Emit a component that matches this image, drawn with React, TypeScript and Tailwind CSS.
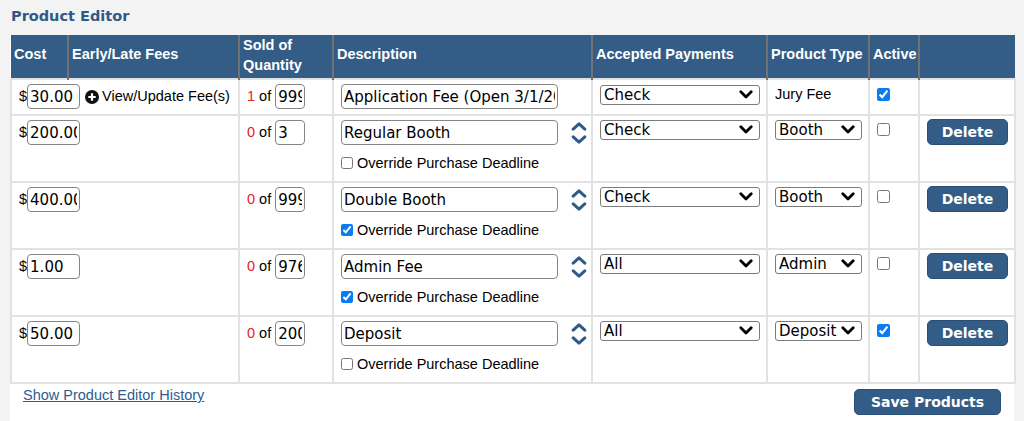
import React from "react";

type Row = {
  cost: string;
  sold: number;
  qty: string;
  desc: string;
  override?: boolean;
  payment: string;
  type: string;
  active: boolean;
  first?: boolean;
};

const rows: Row[] = [
  { cost: "30.00", sold: 1, qty: "999", desc: "Application Fee (Open 3/1/2025)", payment: "Check", type: "Jury Fee", active: true, first: true },
  { cost: "200.00", sold: 0, qty: "3", desc: "Regular Booth", override: false, payment: "Check", type: "Booth", active: false },
  { cost: "400.00", sold: 0, qty: "999", desc: "Double Booth", override: true, payment: "Check", type: "Booth", active: false },
  { cost: "1.00", sold: 0, qty: "976", desc: "Admin Fee", override: true, payment: "All", type: "Admin", active: false },
  { cost: "50.00", sold: 0, qty: "200", desc: "Deposit", override: false, payment: "All", type: "Deposit", active: true },
];

const sans = "font-['Liberation_Sans',Arial,sans-serif]";
const dv = "font-['DejaVu_Sans',Verdana,sans-serif]";

function Chevron() {
  return (
    <svg width="14" height="9" viewBox="0 0 14 9" className="pointer-events-none absolute right-[7px] top-[5px]">
      <path d="M1.8 1.8 L7 7 L12.2 1.8" fill="none" stroke="#000" strokeWidth="2.8" strokeLinecap="round" strokeLinejoin="round" />
    </svg>
  );
}

function Select({ value, width }: { value: string; width: string }) {
  return (
    <div className={`relative ${width}`}>
      <select
        defaultValue={value}
        className={`${dv} block h-[20px] w-full appearance-none rounded-[3px] border border-[#7b7b7b] bg-white pl-[3px] text-[15px] leading-[18px] text-black outline-none`}
      >
        <option>{value}</option>
      </select>
      <Chevron />
    </div>
  );
}

function UpDown() {
  return (
    <svg width="16" height="22" viewBox="0 0 16 22" className="ml-[13px] shrink-0">
      <path d="M2.2 7.2 L8 1.8 L13.8 7.2" fill="none" stroke="#2f5b86" strokeWidth="3" strokeLinecap="round" strokeLinejoin="round" />
      <path d="M2.2 14.8 L8 20.2 L13.8 14.8" fill="none" stroke="#2f5b86" strokeWidth="3" strokeLinecap="round" strokeLinejoin="round" />
    </svg>
  );
}

function PlusCircle() {
  return (
    <svg width="14" height="14" viewBox="0 0 14 14" className="shrink-0">
      <circle cx="7" cy="7" r="7" fill="#111" />
      <path d="M7 3.3 V10.7 M3.3 7 H10.7" stroke="#fff" strokeWidth="2.2" />
    </svg>
  );
}

const inputCls = `${dv} h-[25px] rounded-[4px] border border-[#858585] bg-white px-[2px] text-[15px] text-black outline-none`;

const td = "border-2 border-[#e2e2e2] align-top pt-[4px] pl-[7px] pr-0";
const th = "border-x-2 border-[#727272] px-[3px] text-left align-middle font-bold text-[14.5px] leading-[20px] text-white";

export default function App() {
  return (
    <div className={`${sans} h-[421px] w-[1024px] overflow-hidden bg-[#f3f3f3] text-[14.5px] text-black`}>
      <div className="h-[35px] pl-[11px] pt-[6px]">
        <span className={`${dv} text-[14.5px] font-bold leading-[18px] text-[#2f5a86]`}>Product Editor</span>
      </div>
      <div className="ml-[10px] w-[1004px] bg-white">
        <table className="w-[1004px] table-fixed border-collapse">
          <colgroup>
            <col className="w-[57px]" />
            <col className="w-[171px]" />
            <col className="w-[94px]" />
            <col className="w-[259px]" />
            <col className="w-[175px]" />
            <col className="w-[102px]" />
            <col className="w-[50px]" />
            <col className="w-[96px]" />
          </colgroup>
          <thead>
            <tr className="h-[42px] bg-[#335c86]">
              <th className={`${th} border-l-0 pb-[6px]`}>Cost</th>
              <th className={`${th} pb-[6px]`}>Early/Late Fees</th>
              <th className={`${th} pb-[3px] leading-[19px]`}>Sold of Quantity</th>
              <th className={`${th} pb-[6px]`}>Description</th>
              <th className={`${th} pb-[6px]`}>Accepted Payments</th>
              <th className={`${th} pb-[6px]`}>Product Type</th>
              <th className={`${th} pb-[6px]`}>Active</th>
              <th className={`${th} border-r-0`}></th>
            </tr>
          </thead>
          <tbody>
            {rows.map((r, i) => (
              <tr key={i} className={r.first ? "h-[36px]" : "h-[67px]"}>
                <td colSpan={2} className={`${td} pl-[6px]`}>
                  <div className="flex items-center">
                    <span>$</span>
                    <input defaultValue={r.cost} className={`${inputCls} w-[53px]`} />
                    {r.first && (
                      <div className="ml-[5px] flex items-center">
                        <PlusCircle />
                        <span className="ml-[3px]">View/Update Fee(s)</span>
                      </div>
                    )}
                  </div>
                </td>
                <td className={`${td} pl-[6px]`}>
                  <div className="flex items-center">
                    <span className="text-[#e8202a]">{r.sold}</span>
                    <span className="ml-[4px]">of</span>
                    <input defaultValue={r.qty} className={`${inputCls} ml-[4px] w-[30px]`} />
                  </div>
                </td>
                <td className={`${td} pl-[7px]`}>
                  <div className="flex items-center">
                    <input defaultValue={r.desc} className={`${inputCls} w-[217px]`} />
                    {!r.first && <UpDown />}
                  </div>
                  {!r.first && (
                    <label className="mt-[10px] flex items-center">
                      <input
                        type="checkbox"
                        defaultChecked={r.override}
                        className="m-0 h-[12px] w-[12px] accent-[#0a7cf2]"
                      />
                      <span className="ml-[4px] leading-[16px]">Override Purchase Deadline</span>
                    </label>
                  )}
                </td>
                <td className={`${td} pl-[7px]`}>
                  <div className={r.first ? "pt-px" : ""}>
                    <Select value={r.payment} width="w-[160px]" />
                  </div>
                </td>
                <td className={`${td} pl-[7px]`}>
                  {r.first ? (
                    <div className="leading-[20px]">{r.type}</div>
                  ) : (
                    <Select value={r.type} width="w-[87px]" />
                  )}
                </td>
                <td className={`${td} pl-[7px]`}>
                  <input
                    type="checkbox"
                    defaultChecked={r.active}
                    className={`m-0 block h-[13px] w-[13px] accent-[#0a7cf2] ${r.first ? "mt-[4px]" : "mt-[3px]"}`}
                  />
                </td>
                <td className={`${td} pl-[7px]`}>
                  {!r.first && (
                    <button className={`${dv} -mt-px h-[26px] w-[81px] rounded-[5px] border border-[#2b4f74] bg-[#335c86] text-[14px] font-bold text-white`}>
                      Delete
                    </button>
                  )}
                </td>
              </tr>
            ))}
          </tbody>
        </table>
        <div className="flex h-[40px] items-start justify-between">
          <a href="#" className="pl-[13px] pt-[3px] leading-[16px] text-[#2c5d90] underline">
            Show Product Editor History
          </a>
          <button className={`${dv} mr-[13px] mt-[5px] h-[26px] w-[147px] rounded-[5px] border border-[#2b4f74] bg-[#335c86] text-[14px] font-bold text-white`}>
            Save Products
          </button>
        </div>
      </div>
    </div>
  );
}
